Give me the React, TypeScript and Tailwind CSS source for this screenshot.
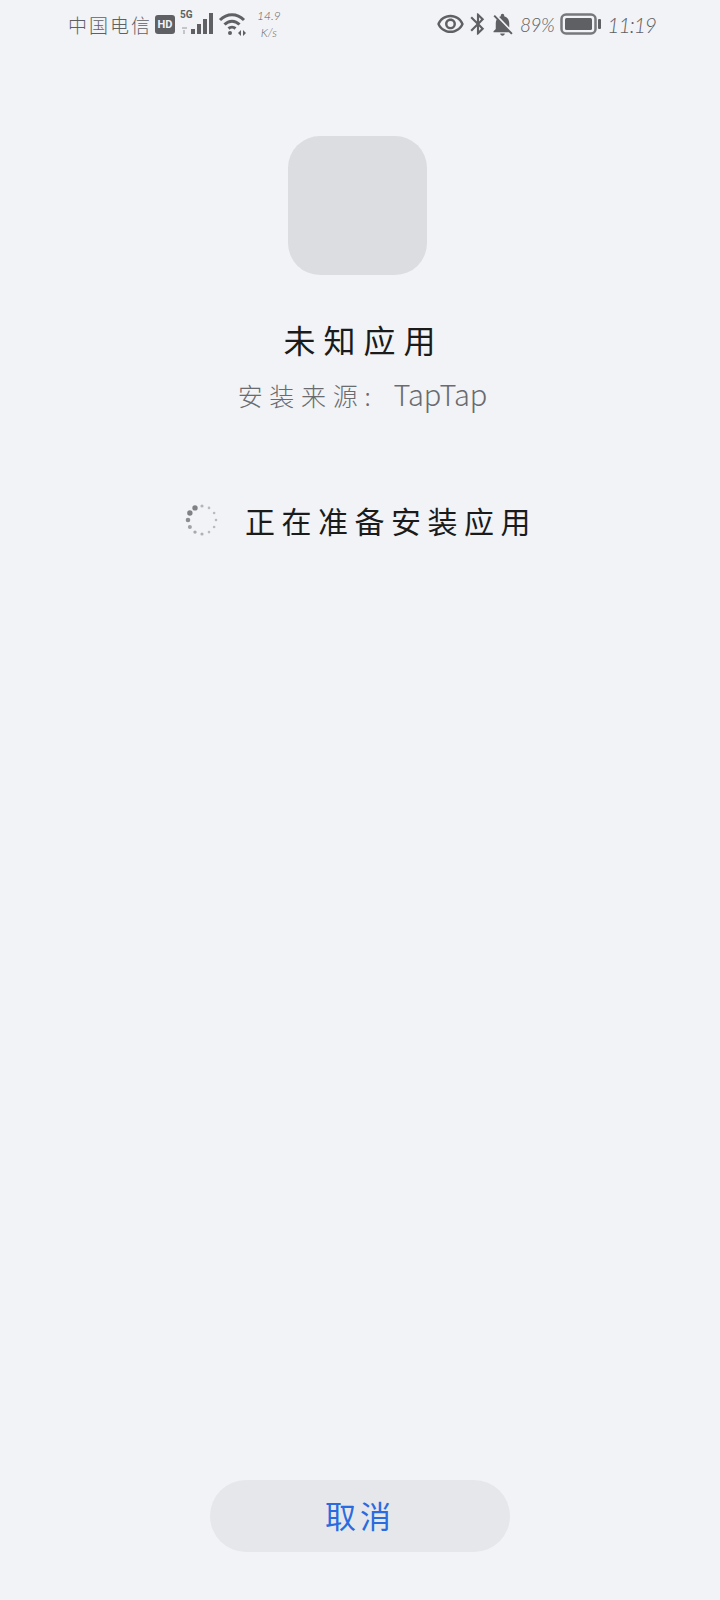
import { MdBluetooth, MdNotificationsOff, MdOutlineVisibility } from "react-icons/md";

const cjk = "font-['Noto_Sans_CJK_SC','Noto_Sans',sans-serif]";

function Signal() {
  return (
    <svg width="34" height="24" viewBox="0 0 34 24" className="text-[#5f6063]">
      <rect x="2" y="15" width="5" height="2" fill="#c4c5c8" />
      <rect x="3" y="18" width="2" height="4" fill="#c4c5c8" />
      <rect x="11" y="17" width="4" height="5" fill="currentColor" />
      <rect x="17" y="12" width="4" height="10" fill="currentColor" />
      <rect x="23" y="7" width="4" height="15" fill="currentColor" />
      <rect x="29" y="1" width="4" height="21" fill="currentColor" />
    </svg>
  );
}

function Wifi() {
  return (
    <svg width="28" height="24" viewBox="0 0 28 24" fill="none" stroke="#5f6063" strokeWidth="3">
      <path d="M2 8 C9 1 19 1 26 8" />
      <path d="M6.5 12.5 C11 8 17 8 21.5 12.5" />
      <path d="M10.5 16.5 C12.5 14.8 15.5 14.8 17.5 16.5" />
      <circle cx="12" cy="21" r="2" fill="#5f6063" stroke="none" />
      <path d="M20 21 l3 -3 v6 z M28 21 l-3 -3 v6 z" fill="#5f6063" stroke="none" />
    </svg>
  );
}

function Battery() {
  return (
    <svg width="42" height="24" viewBox="0 0 42 24" fill="none">
      <rect x="1.5" y="2.5" width="34" height="19" rx="4.5" stroke="#77787b" strokeWidth="2.5" />
      <rect x="5" y="6" width="27" height="12" rx="1.5" fill="#5f6063" />
      <rect x="38" y="7" width="3" height="10" rx="1" fill="#5f6063" />
    </svg>
  );
}

// clockwise from 12 o'clock, 30deg apart
const spinnerDots: [number, string][] = [
  [1.6, "#b4b5b8"],
  [1.3, "#b9babd"],
  [1.3, "#b9babd"],
  [1.3, "#b9babd"],
  [1.3, "#b9babd"],
  [1.3, "#b9babd"],
  [1.6, "#b0b1b4"],
  [1.7, "#a8a9ac"],
  [2, "#a0a1a4"],
  [2.3, "#8c8d90"],
  [2.7, "#808184"],
  [2.7, "#808184"],
];

function Spinner() {
  return (
    <svg width="34" height="34" viewBox="0 0 34 34">
      {spinnerDots.map(([r, c], i) => (
        <circle
          key={i}
          cx={17 + 14 * Math.sin((i * 30 * Math.PI) / 180)}
          cy={17 - 14 * Math.cos((i * 30 * Math.PI) / 180)}
          r={r}
          fill={c}
        />
      ))}
    </svg>
  );
}

export default function App() {
  return (
    <div className={`flex h-[1600px] w-[720px] flex-col items-center bg-[#f1f3f7] ${cjk}`}>
      {/* Status bar */}
      <div className="flex h-12 w-full items-center justify-between pl-[68px] pr-[64px] text-[#5f6063]">
        <div className="flex items-center">
          <span className="text-[19px] font-light leading-none tracking-[2px]">中国电信</span>
          <span className="ml-[3px] flex h-[19px] w-5 items-center justify-center rounded-[3px] bg-[#5f6063] font-['Roboto',sans-serif] text-[11px] font-bold leading-none text-[#f1f3f7]">
            HD
          </span>
          <div className="relative ml-[5px]">
            <span className="absolute left-0 top-[-2px] font-['Roboto',sans-serif] text-[10px] font-bold leading-none">5G</span>
            <Signal />
          </div>
          <div className="ml-1">
            <Wifi />
          </div>
          <div className="ml-[11px] flex flex-col items-center font-['Lato',sans-serif] text-[12px] font-light italic leading-[17px]">
            <span>14.9</span>
            <span>K/s</span>
          </div>
        </div>
        <div className="flex items-center">
          <MdOutlineVisibility className="text-[29px]" />
          <MdBluetooth className="text-[26px]" />
          <MdNotificationsOff className="ml-[-2px] text-[27px]" />
          <span className="ml-1 font-['Lato',sans-serif] text-[19px] font-light italic leading-none tracking-[-0.5px]">89%</span>
          <div className="ml-[6px]">
            <Battery />
          </div>
          <span className="ml-[5px] font-['Lato',sans-serif] text-[21px] font-light italic leading-none tracking-[-1px]">11:19</span>
        </div>
      </div>

      {/* App info */}
      <div className="mt-[88px] mr-[5px] h-[139px] w-[139px] rounded-[32px] bg-[#dcdde0]" />
      <h1 className="mt-[42px] pl-[7px] text-[32px] font-normal leading-[44px] tracking-[8px] text-[#1b1b1b]">未知应用</h1>
      <p className="mt-[14px] pl-[5px] text-[25px] font-light leading-9 tracking-[6.7px] text-[#6a6b6e]">
        安装来源:
        <span className="ml-[16px] text-[29px] tracking-[0px]">TapTap</span>
      </p>

      {/* Progress */}
      <div className="mt-[85px] flex items-center pl-[2px]">
        <Spinner />
        <span className="ml-[26px] text-[30px] font-normal leading-[44px] tracking-[6.5px] text-[#1b1b1b]">正在准备安装应用</span>
      </div>

      {/* Cancel */}
      <button
        type="button"
        className="mt-auto mb-[48px] h-[72px] w-[300px] rounded-full bg-[#e6e7ea] pb-[3px] text-[31px] font-normal leading-none tracking-[4px] text-[#2a6bdf]"
      >
        取消
      </button>
    </div>
  );
}
